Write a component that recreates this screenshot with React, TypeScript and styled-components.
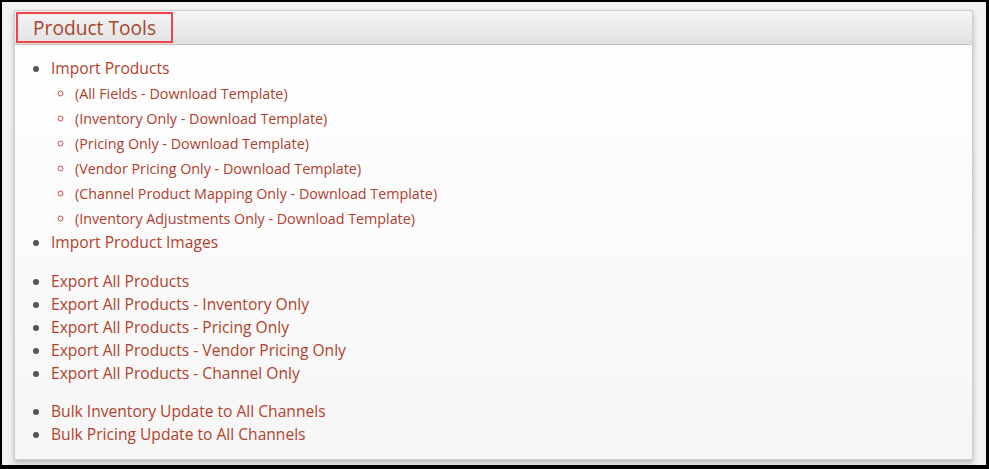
import React from "react";
import styled, { createGlobalStyle } from "styled-components";

const Global = createGlobalStyle`
  html, body { margin: 0; padding: 0; }
  body { font-family: "Open Sans", "Liberation Sans", sans-serif; background: #000; }
`;

const Frame = styled.div`
  box-sizing: border-box;
  width: 989px;
  height: 469px;
  border-style: solid;
  border-color: #000;
  border-width: 2px 3px 4px 2px;
  background: #f2f2f2;
  padding: 8px 0 0 12px;
`;

const Panel = styled.section`
  box-sizing: border-box;
  width: 959px;
  height: 450px;
  border: 1px solid #cfcfcf;
  background: linear-gradient(#ffffff, #f7f6f6);
  box-shadow: 0 3px 5px rgba(0, 0, 0, 0.25);
  display: flex;
  flex-direction: column;
`;

const Header = styled.header`
  height: 32px;
  background: linear-gradient(#f5f5f5, #e2e2e2);
  border-bottom: 1px solid #cdbfbf;
  padding: 1px 0 0 1px;
  box-sizing: content-box;
  display: flex;
  align-items: flex-start;
`;

const TitleBox = styled.div`
  box-sizing: border-box;
  width: 157px;
  height: 31px;
  border: 2px solid #f0444a;
  display: flex;
  align-items: center;
  padding-left: 15px;
`;

const Title = styled.h2`
  margin: 0;
  font-weight: 400;
  font-size: 19.2px;
  color: #a8452f;
  line-height: 1;
`;

const Body = styled.div`
  padding: 12px 0 0 0;
`;

const List = styled.ul<{ $gapAfter?: number }>`
  margin: 0 0 ${(p) => p.$gapAfter ?? 0}px 0;
  padding: 0 0 0 36px;
  list-style: disc;
  li::marker { color: #555; }
`;

const Item = styled.li`
  font-size: 15.6px;
  line-height: 23px;
  color: #b0422d;
`;

const SubList = styled.ul`
  margin: 1px 0 0 0;
  padding: 0 0 0 24px;
  list-style: circle;
  li::marker { color: #c05050; }
`;

const SubItem = styled.li`
  font-size: 14.3px;
  line-height: 25px;
  color: #ad3e30;
`;

const Link = styled.a`
  color: inherit;
  text-decoration: none;
  cursor: pointer;
`;

const subs = [
  "(All Fields - Download Template)",
  "(Inventory Only - Download Template)",
  "(Pricing Only - Download Template)",
  "(Vendor Pricing Only - Download Template)",
  "(Channel Product Mapping Only - Download Template)",
  "(Inventory Adjustments Only - Download Template)",
];

const exportsList = [
  "Export All Products",
  "Export All Products - Inventory Only",
  "Export All Products - Pricing Only",
  "Export All Products - Vendor Pricing Only",
  "Export All Products - Channel Only",
];

const bulk = [
  "Bulk Inventory Update to All Channels",
  "Bulk Pricing Update to All Channels",
];

export default function App() {
  return (
    <>
      <Global />
      <Frame>
        <Panel>
          <Header>
            <TitleBox>
              <Title>Product Tools</Title>
            </TitleBox>
          </Header>
          <Body>
            <List $gapAfter={16}>
              <Item>
                <Link>Import Products</Link>
                <SubList>
                  {subs.map((s) => (
                    <SubItem key={s}>
                      <Link>{s}</Link>
                    </SubItem>
                  ))}
                </SubList>
              </Item>
              <Item>
                <Link>Import Product Images</Link>
              </Item>
            </List>
            <List $gapAfter={15}>
              {exportsList.map((s) => (
                <Item key={s}>
                  <Link>{s}</Link>
                </Item>
              ))}
            </List>
            <List>
              {bulk.map((s) => (
                <Item key={s}>
                  <Link>{s}</Link>
                </Item>
              ))}
            </List>
          </Body>
        </Panel>
      </Frame>
    </>
  );
}
